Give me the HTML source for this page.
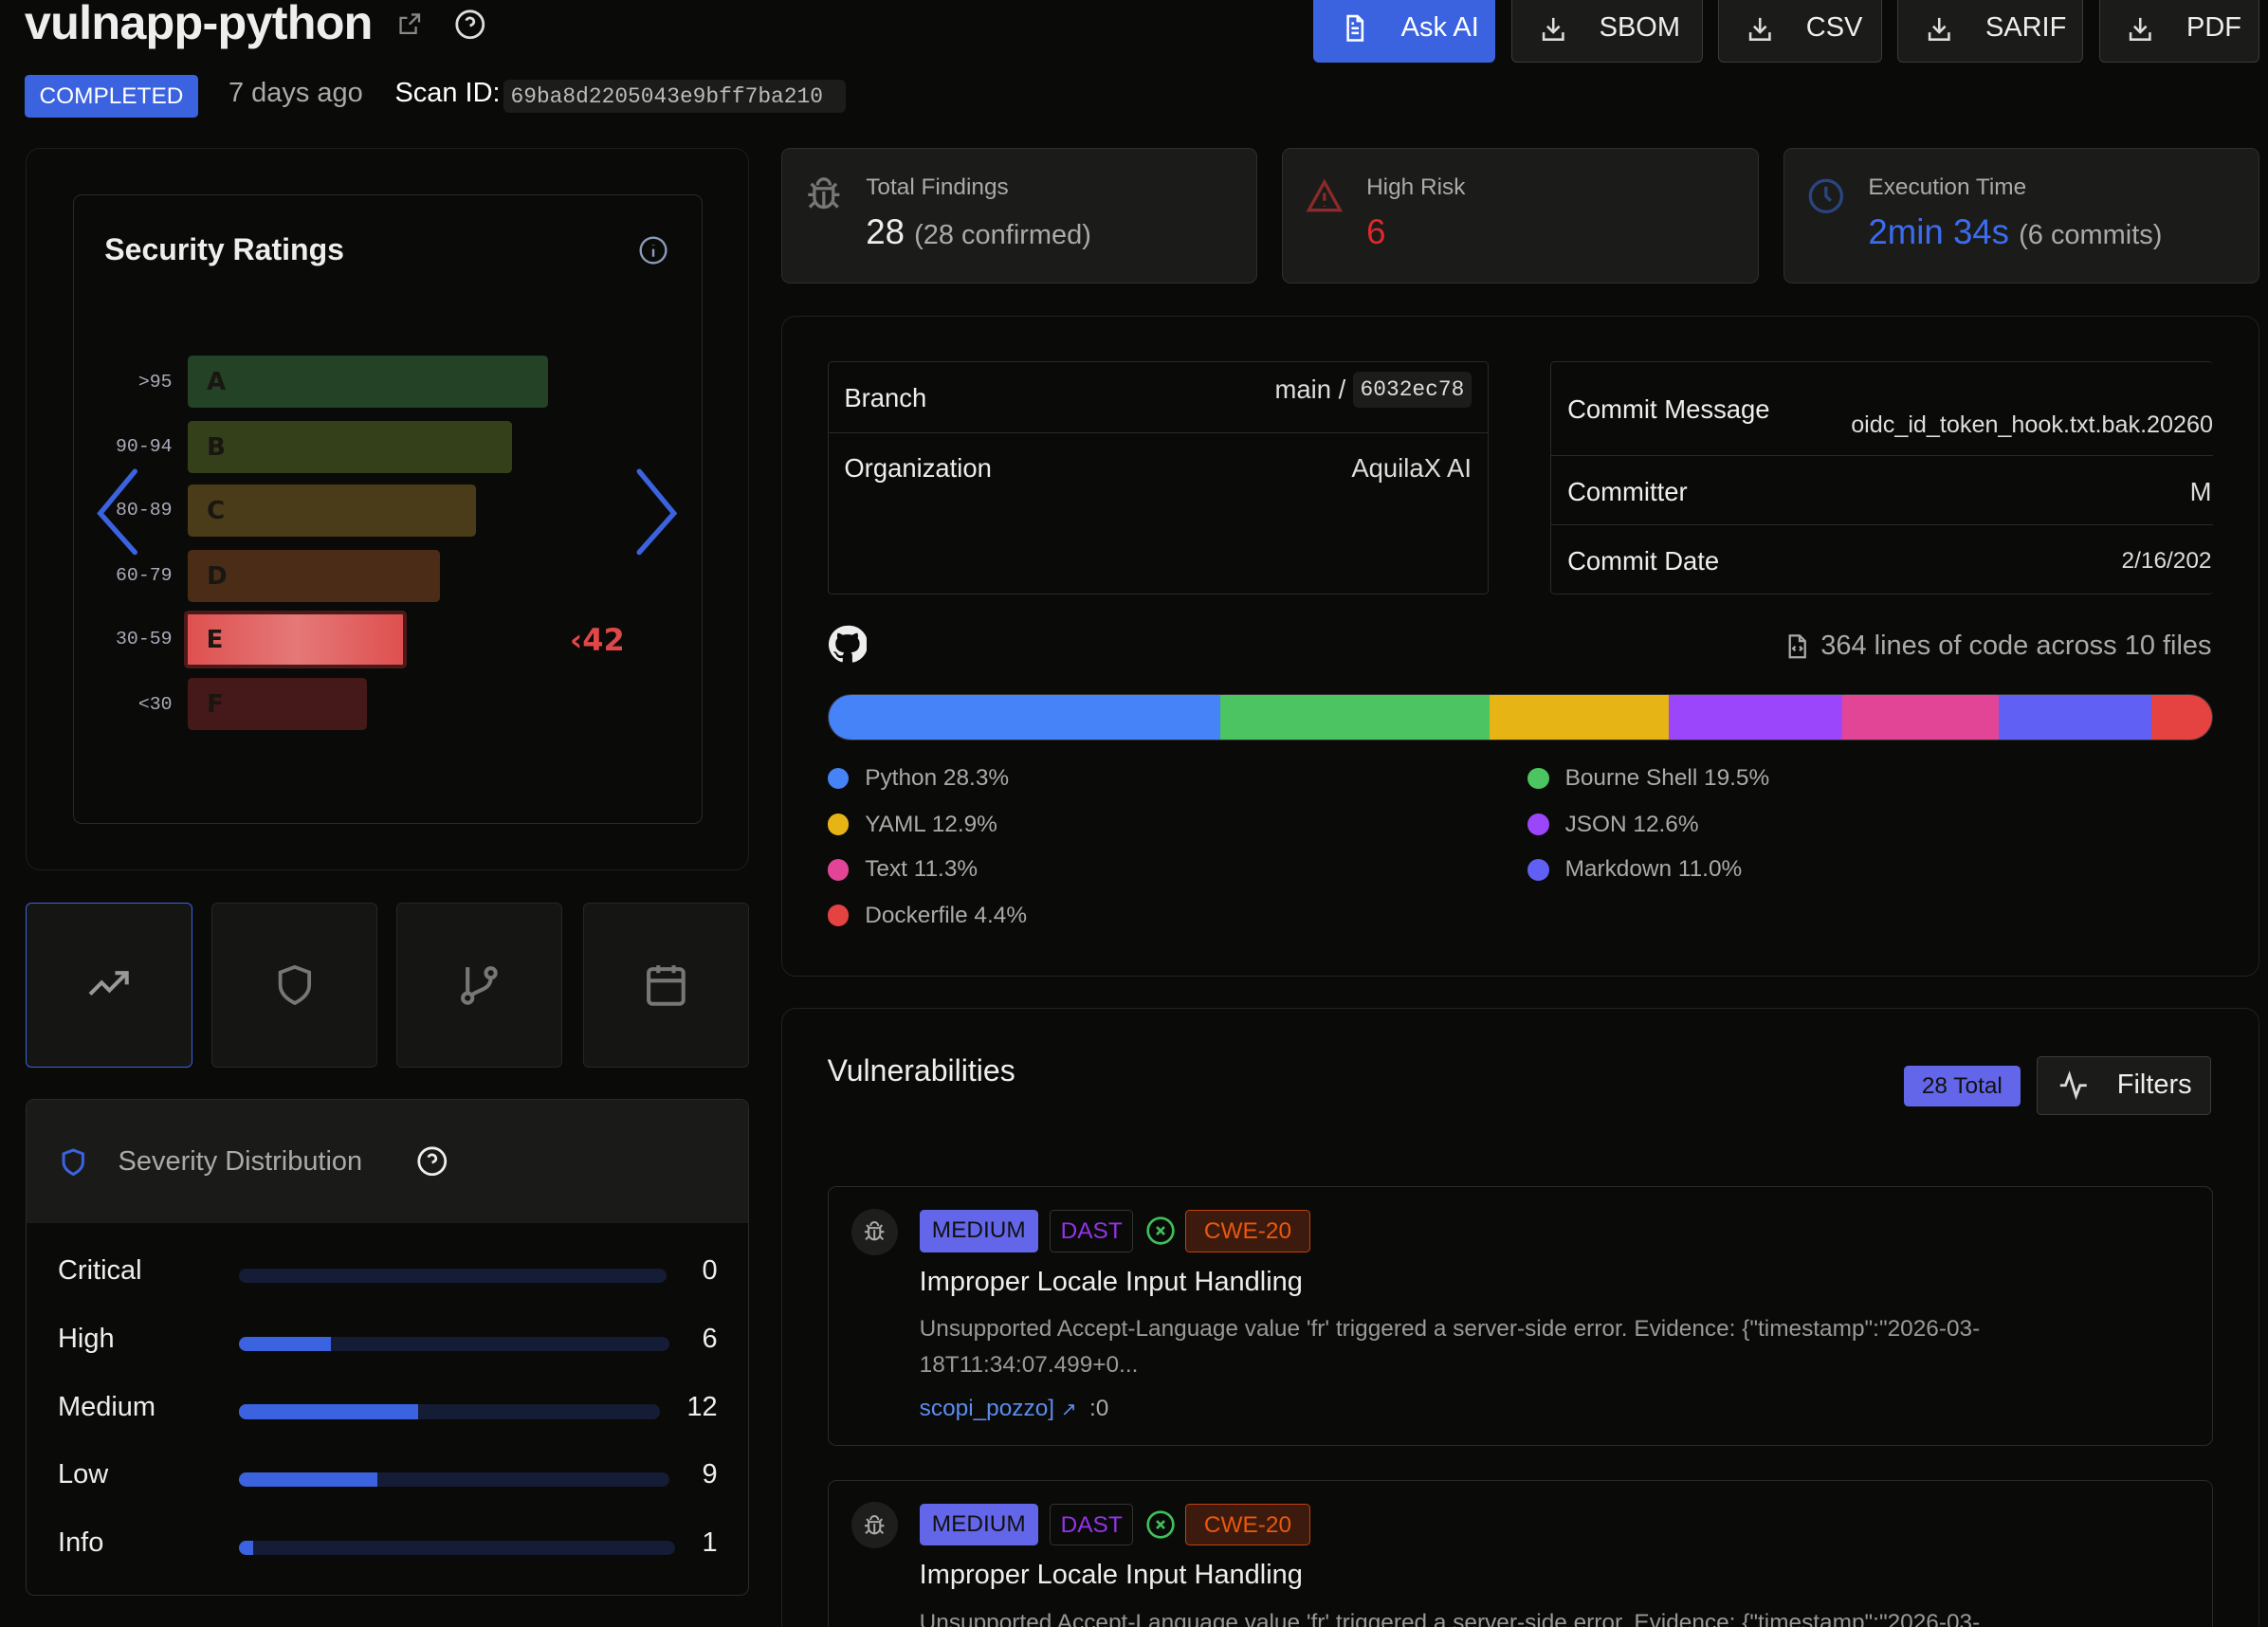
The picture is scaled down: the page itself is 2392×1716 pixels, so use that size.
<!DOCTYPE html>
<html><head><meta charset="utf-8">
<style>
*{box-sizing:border-box;margin:0;padding:0}
html,body{width:2392px;height:1716px;overflow:hidden;background:#0a0a08}
#w{position:absolute;left:0;top:0;width:1568px;height:1125px;zoom:1.52551;font-family:"Liberation Sans",sans-serif;color:#eee;overflow:hidden}
.a{position:absolute}
.card{position:absolute;border:1px solid #2a2a28;border-radius:10px}
.btn{position:absolute;top:-4px;height:47px;background:#1b1b19;border:1px solid #3a3a38;border-radius:4px;display:flex;align-items:center;font-size:19px;color:#eee}
.btn svg{margin-left:18px;margin-right:22px}
.mono{font-family:"Liberation Mono",monospace}
.stat{position:absolute;top:102px;height:94px;background:#1b1b19;border:1px solid #2e2e2c;border-radius:6px}
.stat .l{position:absolute;left:58px;top:18px;font-size:16px;color:#aaa}
.stat .v{position:absolute;left:58px;top:44px;font-size:24px}
.stat .v small{font-size:19px;color:#aaa}
.lbl{position:absolute;left:0;width:119px;text-align:right;font-family:"Liberation Mono",monospace;font-size:13px;color:#aab}
.bar{position:absolute;left:130px;height:36px;border-radius:3px;font-family:"DejaVu Sans",sans-serif;font-weight:bold;font-size:17px;color:#1a1612;padding-left:13px;line-height:38px}
.tab{position:absolute;top:624px;width:115px;height:114px;background:#151513;border:1px solid #262624;border-radius:4px;display:flex;align-items:center;justify-content:center}
.srow{position:absolute;left:40px;width:456px;font-size:19px}
.srow .t{position:absolute;left:125px;top:9px;height:10px;border-radius:5px;background:#151c35;overflow:hidden}
.srow .f{height:10px;background:#3b63e0}
.srow .n{position:absolute;right:0;top:0}
.row{position:absolute;left:0;right:0;border-top:1px solid #2a2a28;font-size:18px}
.leg{position:absolute;font-size:16px;color:#aaa;display:flex;align-items:center}
.leg i{display:inline-block;width:15px;height:15px;border-radius:50%;margin-right:11px}
.vc{position:absolute;left:572px;width:958px;height:180px;border:1px solid #2a2a28;border-radius:6px}
.bg{position:absolute;top:16px;height:29px;border-radius:3px;font-size:16px;line-height:29px;text-align:center}
</style></head><body><div id="w">

<div class="a" style="left:17px;top:-4px;font-size:33px;font-weight:bold;letter-spacing:-0.5px">vulnapp-python</div>
<svg class="a" style="left:274px;top:8px" width="18" height="18" viewBox="0 0 24 24" fill="none" stroke="#888" stroke-width="2"><path d="M14 3h7v7M21 3l-9 9M18 14v6H4V6h6"/></svg>
<svg class="a" style="left:314px;top:6px" width="22" height="22" viewBox="0 0 24 24" fill="none" stroke="#ddd" stroke-width="2"><circle cx="12" cy="12" r="10"/><path d="M9.1 9a3 3 0 015.8 1c0 2-3 3-3 3M12 17h.01"/></svg>

<div class="a" style="left:17px;top:52px;width:120px;height:29px;background:#3b63e0;border-radius:3px;font-size:16px;text-align:center;line-height:30px;color:#fff">COMPLETED</div>
<div class="a" style="left:158px;top:54px;font-size:19px;color:#aaa">7 days ago</div>
<div class="a" style="left:273px;top:54px;font-size:19px;color:#fff">Scan ID:</div>
<div class="a mono" style="left:348px;top:55px;width:237px;height:23px;background:#1c1c1a;border-radius:4px;font-size:15px;color:#bbb;line-height:24px;padding-left:5px">69ba8d2205043e9bff7ba210</div>

<div class="btn" style="left:908px;width:126px;background:#3b63e0;border-color:#3b63e0;color:#fff"><svg width="20" height="22" viewBox="0 0 24 24" fill="none" stroke="#fff" stroke-width="2"><path d="M14 2H6v20h12V6z M14 2v4h4M9 12h6M9 16h6M9 8h2"/></svg>Ask AI</div>
<div class="btn" style="left:1045px;width:132px"><svg width="20" height="20" viewBox="0 0 24 24" fill="none" stroke="#ddd" stroke-width="2"><path d="M12 3v12M7 10l5 5 5-5M4 15v6h16v-6"/></svg>SBOM</div>
<div class="btn" style="left:1188px;width:113px"><svg width="20" height="20" viewBox="0 0 24 24" fill="none" stroke="#ddd" stroke-width="2"><path d="M12 3v12M7 10l5 5 5-5M4 15v6h16v-6"/></svg>CSV</div>
<div class="btn" style="left:1312px;width:128px"><svg width="20" height="20" viewBox="0 0 24 24" fill="none" stroke="#ddd" stroke-width="2"><path d="M12 3v12M7 10l5 5 5-5M4 15v6h16v-6"/></svg>SARIF</div>
<div class="btn" style="left:1451px;width:111px"><svg width="20" height="20" viewBox="0 0 24 24" fill="none" stroke="#ddd" stroke-width="2"><path d="M12 3v12M7 10l5 5 5-5M4 15v6h16v-6"/></svg>PDF</div>

<!-- left ratings -->
<div class="card" style="left:18px;top:102px;width:500px;height:500px;border-color:#1e1e1c">
 <div class="card" style="left:32px;top:32px;width:435px;height:435px;border-color:#2a2a28;border-radius:6px">
  <div class="a" style="left:21px;top:25px;font-size:21px;font-weight:bold">Security Ratings</div>
  <svg class="a" style="left:390px;top:27px" width="21" height="21" viewBox="0 0 24 24" fill="none" stroke="#8a9ab8" stroke-width="1.8"><circle cx="12" cy="12" r="10"/><path d="M12 11v6M12 7.5v.5"/></svg>
 </div>
</div>
<div class="a" style="left:0;top:0;width:520px;height:620px">
 <div class="lbl" style="top:256px">&gt;95</div>
 <div class="lbl" style="top:301px">90-94</div>
 <div class="lbl" style="top:345px">80-89</div>
 <div class="lbl" style="top:390px">60-79</div>
 <div class="lbl" style="top:434px">30-59</div>
 <div class="lbl" style="top:479px">&lt;30</div>
 <div class="bar" style="top:246px;width:249px;background:#234226">A</div>
 <div class="bar" style="top:291px;width:224px;background:#34401a">B</div>
 <div class="bar" style="top:335px;width:199px;background:#4a3c19">C</div>
 <div class="bar" style="top:380px;width:174px;background:#4a2c17">D</div>
 <div class="bar" style="top:422px;left:127px;width:154px;height:40px;background:linear-gradient(90deg,#df5050,#e57878 50%,#df5050);border:3px solid #4a1a1a;padding-left:13px;line-height:36px">E</div>
 <div class="bar" style="top:469px;width:124px;background:#451919">F</div>
 <div class="a" style="left:394px;top:430px;color:#e04848;font-weight:bold;font-size:21px;font-family:'DejaVu Sans',sans-serif">‹42</div>
 <svg class="a" style="left:62px;top:320px" width="38" height="64" viewBox="0 0 38 64" fill="none" stroke="#3b63e0" stroke-width="3.5" stroke-linecap="round"><path d="M31 6L7 35L31 62"/></svg>
 <svg class="a" style="left:436px;top:320px" width="38" height="64" viewBox="0 0 38 64" fill="none" stroke="#3b63e0" stroke-width="3.5" stroke-linecap="round"><path d="M6 6L30 35L6 62"/></svg>
</div>

<div class="tab" style="left:18px;border-color:#3b63e0"><svg width="32" height="32" viewBox="0 0 24 24" fill="none" stroke="#999" stroke-width="2"><path d="M2 17l6-6 4 4 9-9M15 6h6v6"/></svg></div>
<div class="tab" style="left:146px"><svg width="30" height="34" viewBox="0 0 24 24" fill="none" stroke="#777" stroke-width="2"><path d="M12 2l8 3v7c0 5-4 8-8 10-4-2-8-5-8-10V5z"/></svg></div>
<div class="tab" style="left:274px"><svg width="32" height="32" viewBox="0 0 24 24" fill="none" stroke="#777" stroke-width="2"><circle cx="6" cy="19" r="2.5"/><circle cx="18" cy="6" r="2.5"/><path d="M6 3v13.5M18 8.5c0 6-6 6-10 9"/></svg></div>
<div class="tab" style="left:403px"><svg width="32" height="32" viewBox="0 0 24 24" fill="none" stroke="#777" stroke-width="2"><rect x="3" y="4" width="18" height="18" rx="2"/><path d="M3 10h18M8 2v4M16 2v4"/></svg></div>

<div class="card" style="left:18px;top:760px;width:500px;height:343px;border-radius:6px;overflow:hidden">
 <div class="a" style="left:0;top:0;right:0;height:85px;background:#1a1a18"></div>
 <svg class="a" style="left:22px;top:32px" width="20" height="22" viewBox="0 0 24 24" fill="none" stroke="#3b63e0" stroke-width="2.4"><path d="M12 2l8 3v7c0 5-4 8-8 10-4-2-8-5-8-10V5z"/></svg>
 <div class="a" style="left:63px;top:32px;font-size:19px;color:#aaa">Severity Distribution</div>
 <svg class="a" style="left:269px;top:31px" width="22" height="22" viewBox="0 0 24 24" fill="none" stroke="#eee" stroke-width="2"><circle cx="12" cy="12" r="10"/><path d="M9.1 9a3 3 0 015.8 1c0 2-3 3-3 3M12 17h.01"/></svg>
</div>
<div class="srow" style="top:868px">Critical<div class="t" style="width:296px"><div class="f" style="width:0"></div></div><div class="n">0</div></div>
<div class="srow" style="top:915px">High<div class="t" style="width:298px"><div class="f" style="width:64px"></div></div><div class="n">6</div></div>
<div class="srow" style="top:962px">Medium<div class="t" style="width:291px"><div class="f" style="width:124px"></div></div><div class="n">12</div></div>
<div class="srow" style="top:1009px">Low<div class="t" style="width:298px"><div class="f" style="width:96px"></div></div><div class="n">9</div></div>
<div class="srow" style="top:1056px">Info<div class="t" style="width:302px"><div class="f" style="width:10px"></div></div><div class="n">1</div></div>

<!-- stats -->
<div class="stat" style="left:540px;width:329px">
 <svg class="a" style="left:16px;top:18px" width="26" height="28" viewBox="0 0 24 24" fill="none" stroke="#777" stroke-width="2"><path d="M8 6a4 4 0 018 0M6 8h12v6a6 6 0 01-12 0zM12 10v10M2 12h4M18 12h4M3 20l3-3M21 20l-3-3M4 5l3 3M20 5l-3 3"/></svg>
 <div class="l">Total Findings</div><div class="v">28 <small>(28 confirmed)</small></div></div>
<div class="stat" style="left:886px;width:330px">
 <svg class="a" style="left:16px;top:20px" width="26" height="26" viewBox="0 0 24 24" fill="none" stroke="#8a2a2a" stroke-width="2"><path d="M12 3L2 21h20zM12 10v5M12 18v.5"/></svg>
 <div class="l">High Risk</div><div class="v" style="color:#e02828">6</div></div>
<div class="stat" style="left:1233px;width:329px">
 <svg class="a" style="left:16px;top:20px" width="26" height="26" viewBox="0 0 24 24" fill="none" stroke="#2a4580" stroke-width="2"><circle cx="12" cy="12" r="10"/><path d="M12 6v6l3 3"/></svg>
 <div class="l">Execution Time</div><div class="v" style="color:#3b6cf0">2min 34s <small>(6 commits)</small></div></div>

<!-- info panel -->
<div class="card" style="left:540px;top:218px;width:1022px;height:457px;border-color:#222"></div>
<div class="card" style="left:572px;top:250px;width:457px;height:161px;border-radius:3px">
 <div class="a" style="left:11px;top:14px;font-size:18px">Branch</div>
 <div class="a" style="right:11px;top:6px;display:flex;align-items:center;font-size:18px;color:#ddd">main /&nbsp;<span class="mono" style="background:#1c1c1a;border-radius:4px;padding:4px 5px;font-size:15px">6032ec78</span></div>
 <div class="row" style="top:48px;height:1px"></div>
 <div class="a" style="left:11px;top:63px;font-size:18px">Organization</div>
 <div class="a" style="right:11px;top:63px;font-size:18px;color:#ddd">AquilaX AI</div>
</div>
<div class="card" style="left:1072px;top:250px;width:458px;height:161px;border-radius:3px;overflow:hidden;border-right:none">
 <div class="a" style="left:11px;top:22px;font-size:18px">Commit Message</div>
 <div class="a" style="right:0;top:34px;font-size:16.5px;color:#ddd;white-space:nowrap">oidc_id_token_hook.txt.bak.20260</div>
 <div class="row" style="top:64px"></div>
 <div class="a" style="left:11px;top:79px;font-size:18px">Committer</div>
 <div class="a" style="right:1px;top:79px;font-size:18px;color:#ddd">M</div>
 <div class="row" style="top:112px"></div>
 <div class="a" style="left:11px;top:127px;font-size:18px">Commit Date</div>
 <div class="a" style="right:1px;top:128px;font-size:16px;color:#ddd">2/16/202</div>
</div>
<svg class="a" style="left:572px;top:432px" width="27" height="27" viewBox="0 0 24 24"><path fill="#eee" d="M12 .5a11.5 11.5 0 00-3.6 22.4c.6.1.8-.3.8-.6v-2c-3.2.7-3.9-1.5-3.9-1.5-.5-1.3-1.3-1.7-1.3-1.7-1-.7.1-.7.1-.7 1.2.1 1.8 1.2 1.8 1.200 1 1.8 2.8 1.3 3.5 1 .1-.8.4-1.3.7-1.6-2.6-.3-5.3-1.3-5.3-5.7 0-1.3.5-2.3 1.2-3.1-.1-.3-.5-1.5.1-3.1 0 0 1-.3 3.2 1.2a11 11 0 015.8 0c2.2-1.5 3.2-1.2 3.2-1.2.6 1.6.2 2.8.1 3.1.7.8 1.2 1.8 1.2 3.1 0 4.4-2.7 5.4-5.3 5.7.4.4.8 1.1.8 2.2v3.3c0 .3.2.7.8.6A11.5 11.5 0 0012 .5z"/></svg>
<div class="a" style="right:39px;top:436px;font-size:19px;color:#aaa;display:flex;align-items:center"><svg width="18" height="22" viewBox="0 0 24 24" fill="none" stroke="#aaa" stroke-width="2" style="margin-right:7px"><path d="M14 2H5v20h14V7zM14 2v5h5M10 12l-2 2 2 2M14 12l2 2-2 2"/></svg>364 lines of code across 10 files</div>
<div class="a" style="left:572px;top:480px;width:958px;height:32px;border-radius:16px;overflow:hidden;display:flex;border:1px solid #333">
 <div style="width:271px;background:#4682f8"></div><div style="width:186px;background:#4cc462"></div><div style="width:124px;background:#e6b414"></div><div style="width:120px;background:#9b46fa"></div><div style="width:108px;background:#e24596"></div><div style="width:106px;background:#6060f5"></div><div style="flex:1;background:#e54242"></div>
</div>
<div class="leg" style="left:572px;top:529px"><i style="background:#4682f8"></i>Python 28.3%</div>
<div class="leg" style="left:572px;top:561px"><i style="background:#e6b414"></i>YAML 12.9%</div>
<div class="leg" style="left:572px;top:592px"><i style="background:#e24596"></i>Text 11.3%</div>
<div class="leg" style="left:572px;top:624px"><i style="background:#e54242"></i>Dockerfile 4.4%</div>
<div class="leg" style="left:1056px;top:529px"><i style="background:#4cc462"></i>Bourne Shell 19.5%</div>
<div class="leg" style="left:1056px;top:561px"><i style="background:#9b46fa"></i>JSON 12.6%</div>
<div class="leg" style="left:1056px;top:592px"><i style="background:#6060f5"></i>Markdown 11.0%</div>

<!-- vulnerabilities -->
<div class="card" style="left:540px;top:697px;width:1022px;height:428px;border-color:#222;border-bottom:none;border-radius:10px 10px 0 0"></div>
<div class="a" style="left:572px;top:728px;font-size:21px">Vulnerabilities</div>
<div class="a" style="left:1316px;top:737px;width:81px;height:28px;background:#6366e8;border-radius:3px;color:#111;font-size:16px;text-align:center;line-height:29px">28 Total</div>
<div class="a" style="left:1408px;top:730px;width:121px;height:41px;background:#1b1b19;border:1px solid #3a3a38;border-radius:3px;font-size:19px;display:flex;align-items:center"><svg style="margin:0 19px 0 14px" width="22" height="22" viewBox="0 0 24 24" fill="none" stroke="#ddd" stroke-width="2"><path d="M2 12h4l3-8 5 16 3-8h5"/></svg>Filters</div>

<div class="vc" style="top:820px">
 <div class="a" style="left:16px;top:15px;width:32px;height:32px;border-radius:50%;background:#1e1e1c"></div>
 <svg class="a" style="left:24px;top:23px" width="16" height="16" viewBox="0 0 24 24" fill="none" stroke="#aaa" stroke-width="2"><path d="M8 6a4 4 0 018 0M6 8h12v6a6 6 0 01-12 0zM12 10v10M2 12h4M18 12h4M3 20l3-3M21 20l-3-3M4 5l3 3M20 5l-3 3"/></svg>
 <div class="bg" style="left:63px;width:82px;background:#6366e8;color:#111">MEDIUM</div>
 <div class="bg" style="left:153px;width:58px;border:1px solid #333;color:#9333ea">DAST</div>
 <svg class="a" style="left:219px;top:20px" width="21" height="21" viewBox="0 0 24 24" fill="none" stroke="#3fbf5a" stroke-width="2"><circle cx="12" cy="12" r="10"/><path d="M9 9l6 6M15 9l-6 6"/></svg>
 <div class="bg" style="left:247px;width:86px;background:#3d1a0e;border:1px solid #c2410c;color:#ea580c">CWE-20</div>
 <div class="a" style="left:63px;top:55px;font-size:19px">Improper Locale Input Handling</div>
 <div class="a" style="left:63px;top:86px;width:820px;font-size:16px;color:#999;line-height:25px">Unsupported Accept-Language value 'fr' triggered a server-side error. Evidence: {"timestamp":"2026-03-18T11:34:07.499+0...</div>
 <div class="a" style="left:63px;top:144px;font-size:16px;color:#5b8def">scopi_pozzo] <span style="font-size:13px">↗</span> <span style="color:#aaa">&nbsp;:0</span></div>
</div>
<div class="vc" style="top:1023px;height:102px;border-bottom:none;border-radius:6px 6px 0 0;overflow:hidden">
 <div class="a" style="left:16px;top:15px;width:32px;height:32px;border-radius:50%;background:#1e1e1c"></div>
 <svg class="a" style="left:24px;top:23px" width="16" height="16" viewBox="0 0 24 24" fill="none" stroke="#aaa" stroke-width="2"><path d="M8 6a4 4 0 018 0M6 8h12v6a6 6 0 01-12 0zM12 10v10M2 12h4M18 12h4M3 20l3-3M21 20l-3-3M4 5l3 3M20 5l-3 3"/></svg>
 <div class="bg" style="left:63px;width:82px;background:#6366e8;color:#111">MEDIUM</div>
 <div class="bg" style="left:153px;width:58px;border:1px solid #333;color:#9333ea">DAST</div>
 <svg class="a" style="left:219px;top:20px" width="21" height="21" viewBox="0 0 24 24" fill="none" stroke="#3fbf5a" stroke-width="2"><circle cx="12" cy="12" r="10"/><path d="M9 9l6 6M15 9l-6 6"/></svg>
 <div class="bg" style="left:247px;width:86px;background:#3d1a0e;border:1px solid #c2410c;color:#ea580c">CWE-20</div>
 <div class="a" style="left:63px;top:55px;font-size:19px">Improper Locale Input Handling</div>
 <div class="a" style="left:63px;top:86px;width:820px;font-size:16px;color:#999;line-height:25px">Unsupported Accept-Language value 'fr' triggered a server-side error. Evidence: {"timestamp":"2026-03-18T11:34:07.499+0...</div>
</div>

</div></body></html>
